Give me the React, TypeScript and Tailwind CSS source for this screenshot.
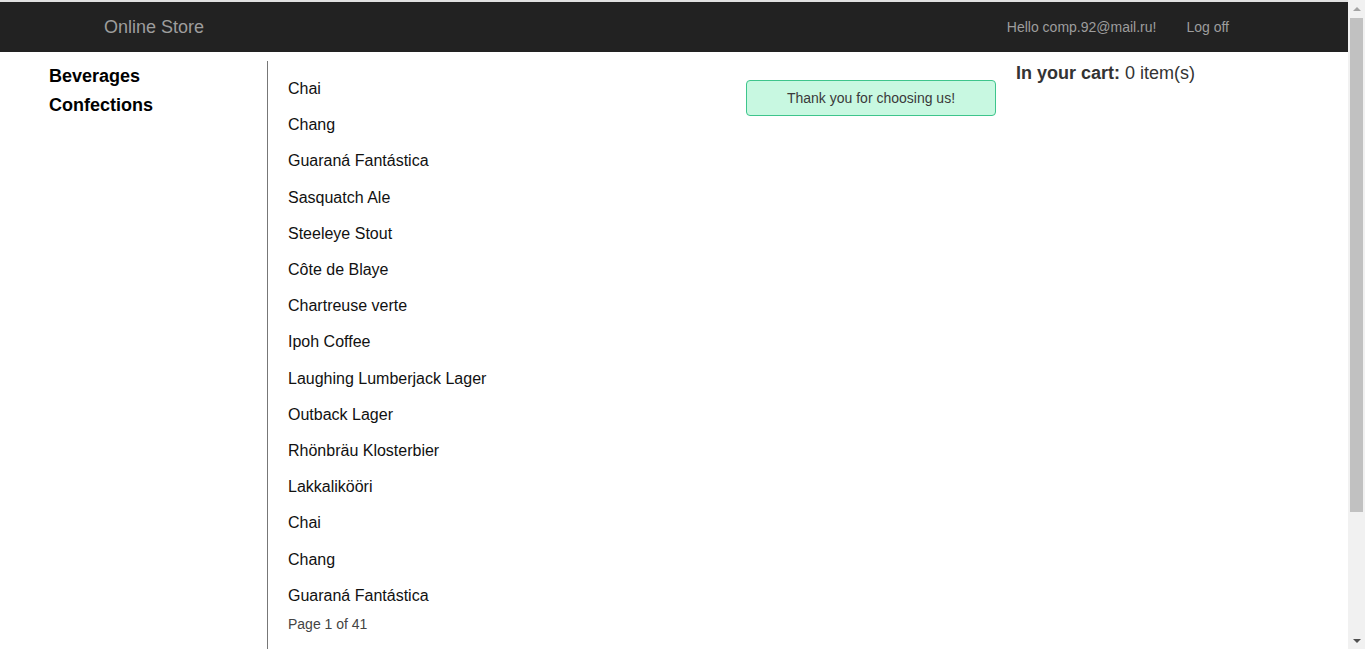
const products = [
  "Chai",
  "Chang",
  "Guaraná Fantástica",
  "Sasquatch Ale",
  "Steeleye Stout",
  "Côte de Blaye",
  "Chartreuse verte",
  "Ipoh Coffee",
  "Laughing Lumberjack Lager",
  "Outback Lager",
  "Rhönbräu Klosterbier",
  "Lakkalikööri",
  "Chai",
  "Chang",
  "Guaraná Fantástica",
];

const categories = ["Beverages", "Confections"];

function Scrollbar() {
  return (
    <div className="flex h-full w-[17px] shrink-0 flex-col bg-[#f1f1f1]">
      <div className="flex h-[17px] items-center justify-center">
        <div className="h-0 w-0 border-x-[4px] border-b-[4px] border-x-transparent border-b-[#a3a3a3]" />
      </div>
      <div className="mx-[2px] mt-[1px] h-[494px] bg-[#c1c1c1]" />
      <div className="flex-1" />
      <div className="flex h-[17px] items-center justify-center">
        <div className="h-0 w-0 border-x-[4px] border-t-[4px] border-x-transparent border-t-[#505050]" />
      </div>
    </div>
  );
}

export default function App() {
  return (
    <div
      className="flex h-[649px] w-full overflow-hidden bg-white"
      style={{ fontFamily: '"Liberation Sans", Arial, sans-serif' }}
    >
      <div className="flex min-w-0 flex-1 flex-col">
        <div className="h-[2px] bg-[#e0e0e0]" />
        <nav className="h-[50px] bg-[#222222]">
          <div className="mx-auto flex h-full w-[1170px] items-center px-[15px]">
            <span className="text-[18px] text-[#9d9d9d]">Online Store</span>
            <div className="ml-auto flex items-center text-[14px] text-[#9d9d9d]">
              <span className="px-[15px]">Hello comp.92@mail.ru!</span>
              <span className="px-[15px]">Log off</span>
            </div>
          </div>
        </nav>

        <div className="mt-[9px] flex flex-1 text-[#333]">
          <div className="w-[268px] shrink-0 border-r border-[#777] pl-[49px] pt-[1px]">
            {categories.map((c) => (
              <div
                key={c}
                className="text-[18px] font-bold leading-[29px] text-black"
              >
                {c}
              </div>
            ))}
          </div>

          <div className="w-[478px] shrink-0 pl-[20px] pt-[10px]">
            {products.map((p, i) => (
              <div
                key={i}
                className="text-[16px] leading-[36.2px] text-[#111]"
              >
                {p}
              </div>
            ))}
            <div className="text-[14px] leading-[20px] text-[#444]">
              Page 1 of 41
            </div>
          </div>

          <div className="mt-[19px] flex h-[36px] w-[250px] shrink-0 items-center justify-center rounded-[4px] border border-[#3ec58c] bg-[#c8f8e1] text-[14px] text-[#3a3a3a]">
            Thank you for choosing us!
          </div>

          <div className="ml-[20px] pt-[1px] text-[18px] leading-[22px] text-[#333]">
            <span className="font-bold">In your cart:</span> 0 item(s)
          </div>
        </div>
      </div>
      <Scrollbar />
    </div>
  );
}
